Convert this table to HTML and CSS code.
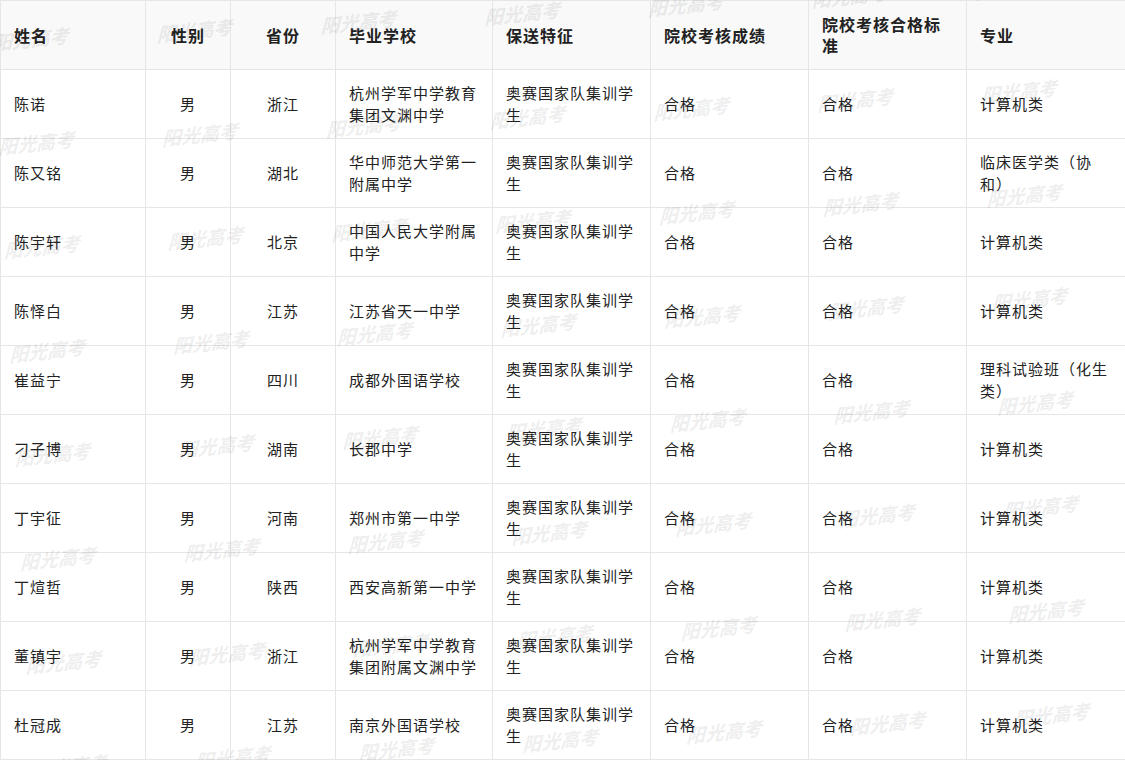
FILE: index.html
```html
<!DOCTYPE html>
<html lang="zh-CN">
<head>
<meta charset="utf-8">
<title>保送生名单</title>
<link rel="stylesheet" href="styles.css">
</head>
<body>
<div class="page">
<table class="list">
<colgroup>
<col class="c-name"><col class="c-sex"><col class="c-prov"><col class="c-school"><col class="c-feat"><col class="c-score"><col class="c-std"><col class="c-major">
</colgroup>
<thead>
<tr><th>姓名</th><th class="ctr">性别</th><th class="ctr">省份</th><th>毕业学校</th><th>保送特征</th><th>院校考核成绩</th><th>院校考核合格标准</th><th>专业</th></tr>
</thead>
<tbody>
<tr><td>陈诺</td><td class="ctr">男</td><td class="ctr">浙江</td><td>杭州学军中学教育集团文渊中学</td><td>奥赛国家队集训学生</td><td>合格</td><td>合格</td><td>计算机类</td></tr>
<tr><td>陈又铭</td><td class="ctr">男</td><td class="ctr">湖北</td><td>华中师范大学第一附属中学</td><td>奥赛国家队集训学生</td><td>合格</td><td>合格</td><td>临床医学类（协和）</td></tr>
<tr><td>陈宇轩</td><td class="ctr">男</td><td class="ctr">北京</td><td>中国人民大学附属中学</td><td>奥赛国家队集训学生</td><td>合格</td><td>合格</td><td>计算机类</td></tr>
<tr><td>陈怿白</td><td class="ctr">男</td><td class="ctr">江苏</td><td>江苏省天一中学</td><td>奥赛国家队集训学生</td><td>合格</td><td>合格</td><td>计算机类</td></tr>
<tr><td>崔益宁</td><td class="ctr">男</td><td class="ctr">四川</td><td>成都外国语学校</td><td>奥赛国家队集训学生</td><td>合格</td><td>合格</td><td>理科试验班（化生类）</td></tr>
<tr><td>刁子博</td><td class="ctr">男</td><td class="ctr">湖南</td><td>长郡中学</td><td>奥赛国家队集训学生</td><td>合格</td><td>合格</td><td>计算机类</td></tr>
<tr><td>丁宇征</td><td class="ctr">男</td><td class="ctr">河南</td><td>郑州市第一中学</td><td>奥赛国家队集训学生</td><td>合格</td><td>合格</td><td>计算机类</td></tr>
<tr><td>丁煊哲</td><td class="ctr">男</td><td class="ctr">陕西</td><td>西安高新第一中学</td><td>奥赛国家队集训学生</td><td>合格</td><td>合格</td><td>计算机类</td></tr>
<tr><td>董镇宇</td><td class="ctr">男</td><td class="ctr">浙江</td><td>杭州学军中学教育集团附属文渊中学</td><td>奥赛国家队集训学生</td><td>合格</td><td>合格</td><td>计算机类</td></tr>
<tr><td>杜冠成</td><td class="ctr">男</td><td class="ctr">江苏</td><td>南京外国语学校</td><td>奥赛国家队集训学生</td><td>合格</td><td>合格</td><td>计算机类</td></tr>
</tbody>
</table>
<div class="marks" aria-hidden="true">
<span>阳光高考</span><span>阳光高考</span><span>阳光高考</span><span>阳光高考</span><span>阳光高考</span><span>阳光高考</span><span>阳光高考</span>
<span>阳光高考</span><span>阳光高考</span><span>阳光高考</span><span>阳光高考</span><span>阳光高考</span><span>阳光高考</span><span>阳光高考</span>
<span>阳光高考</span><span>阳光高考</span><span>阳光高考</span><span>阳光高考</span><span>阳光高考</span><span>阳光高考</span><span>阳光高考</span>
<span>阳光高考</span><span>阳光高考</span><span>阳光高考</span><span>阳光高考</span><span>阳光高考</span><span>阳光高考</span><span>阳光高考</span>
<span>阳光高考</span><span>阳光高考</span><span>阳光高考</span><span>阳光高考</span><span>阳光高考</span><span>阳光高考</span><span>阳光高考</span>
<span>阳光高考</span><span>阳光高考</span><span>阳光高考</span><span>阳光高考</span><span>阳光高考</span><span>阳光高考</span><span>阳光高考</span>
<span>阳光高考</span><span>阳光高考</span><span>阳光高考</span><span>阳光高考</span><span>阳光高考</span><span>阳光高考</span><span>阳光高考</span>
<span>阳光高考</span><span>阳光高考</span><span>阳光高考</span><span>阳光高考</span><span>阳光高考</span><span>阳光高考</span><span>阳光高考</span>
</div>
</div>
</body>
</html>
```

FILE: styles.css
```css
html, body {
  margin: 0;
  padding: 0;
  background: #ffffff;
}

.page {
  position: relative;
  width: 1125px;
  height: 760px;
  overflow: hidden;
  font-family: "Noto Sans CJK SC", "Noto Sans", sans-serif;
  color: #222222;
}

.list {
  width: 1125px;
  border-collapse: collapse;
  table-layout: fixed;
}

.c-name { width: 145px; }
.c-sex { width: 85px; }
.c-prov { width: 105px; }
.c-school { width: 157px; }
.c-feat { width: 158px; }
.c-score { width: 158px; }
.c-std { width: 158px; }
.c-major { width: 159px; }

.list th,
.list td {
  border: 1px solid #e6e6e6;
  padding: 0 12px 0 13px;
  text-align: left;
  vertical-align: middle;
  height: 68px;
  box-sizing: border-box;
}

.list th {
  background: #f9f9f9;
  font-size: 16px;
  font-weight: 700;
  letter-spacing: 1px;
  line-height: 21px;
}

.list td {
  font-size: 15px;
  font-weight: 400;
  letter-spacing: 1px;
  line-height: 22px;
}

.list tr {
  height: 69px;
}

.list .ctr {
  text-align: center;
  padding-left: 6px;
  padding-right: 6px;
}

.marks {
  position: absolute;
  left: -11px;
  top: 32px;
  display: grid;
  grid-template-columns: repeat(7, 164px);
  grid-auto-rows: 104px;
  transform: rotate(-3deg);
  transform-origin: 0 0;
  pointer-events: none;
}

.marks span {
  display: block;
  font-size: 19px;
  line-height: 22px;
  font-weight: 900;
  font-style: italic;
  color: rgba(0, 0, 0, 0.07);
  white-space: nowrap;
  transform: rotate(-3deg) skewX(-8deg);
  transform-origin: 0 50%;
}
```
